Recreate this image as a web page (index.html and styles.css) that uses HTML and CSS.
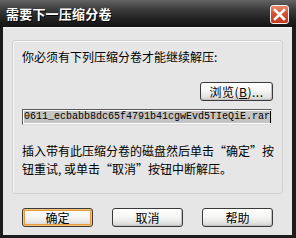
FILE: index.html
```html
<!DOCTYPE html>
<html lang="zh-CN">
<head>
<meta charset="utf-8">
<link rel="stylesheet" href="styles.css">
</head>
<body>
<div class="window">
  <div class="titlebar">
    <span class="title">需要下一压缩分卷</span>
    <button class="close" aria-label="关闭">
      <svg width="13" height="13" viewBox="0 0 13 13"><path d="M2 2 L11 11 M11 2 L2 11" stroke="#fff" stroke-width="2.6" stroke-linecap="square"/></svg>
    </button>
  </div>
  <div class="frame">
    <div class="group">
      <div class="label">你必须有下列压缩分卷才能继续解压:</div>
      <div class="browse-row"><button class="btn browse">浏览(<u>B</u>)...</button></div>
      <div class="input"><span class="sel">0611_ecbabb8dc65f4791b41cgwEvd5TIeQiE.rar</span><span class="caret"></span></div>
      <div class="msg">
        <div class="line">插入带有此压缩分卷的磁盘然后单击<span class="ql">“</span>确定<span class="qr">”</span>按</div>
        <div class="line">钮重试, 或单击<span class="ql">“</span>取消<span class="qr">”</span>按钮中断解压。</div>
      </div>
    </div>
    <div class="buttons">
      <button class="btn default">确定</button>
      <button class="btn">取消</button>
      <button class="btn">帮助</button>
    </div>
  </div>
</div>
</body>
</html>
```

FILE: styles.css
```css
* { box-sizing: border-box; }
html, body { margin: 0; padding: 0; background: #1c1c1c; }
body {
  font-family: "Noto Sans CJK SC", "DejaVu Sans", sans-serif;
  font-size: 12px;
  color: #000;
}
.window {
  width: 296px;
  height: 238px;
  display: flex;
  flex-direction: column;
  background: #1c1c1c;
}
.titlebar {
  height: 27px;
  flex: none;
  display: flex;
  align-items: center;
  justify-content: space-between;
  padding: 0 7px 0 6px;
  background: linear-gradient(#646464 0%, #3c3c3c 35%, #222 70%, #141414 100%);
}
.title {
  color: #fff;
  font-weight: bold;
  font-size: 13px;
  letter-spacing: 0.2px;
  text-shadow: 1px 1px 0 #000;
}
.close {
  width: 19px;
  height: 19px;
  padding: 0;
  margin-top: 1px;
  border: 1px solid #f0f0f0;
  border-radius: 3px;
  background: linear-gradient(#ec8a6a 0%, #d8502e 45%, #c23a1c 100%);
  display: flex;
  align-items: center;
  justify-content: center;
}
.frame {
  flex: 1;
  margin: 0 4px 3px 3px;
  background: #e6e6e6;
  border-top: 1px solid #f4f4f4;
  padding: 12px 9px 0 9px;
}
.group {
  height: 154px;
  border: 1px solid #d0d0d0;
  border-radius: 3px;
  box-shadow: inset 1px 1px 0 #f6f6f6;
  padding: 8px 9px 0 9px;
}
.label {
  line-height: 16px;
  height: 16px;
}
.browse-row {
  display: flex;
  justify-content: flex-end;
  margin-top: 17px;
}
.btn {
  font-family: "Noto Sans CJK SC", "DejaVu Sans", sans-serif;
  font-size: 12px;
  color: #000;
  height: 19px;
  width: 71px;
  padding: 0;
  border: 1px solid #3a3a3a;
  border-radius: 3px;
  background: linear-gradient(#ffffff 0%, #f6f6f4 45%, #e4e4e2 80%, #cfcfcd 100%);
  box-shadow: inset -1px -1px 0 #c2c2c0;
  line-height: 16px;
}
.browse {
  width: 73px;
  letter-spacing: 0.5px;
}
.browse u { text-decoration: underline; }
.input {
  margin-top: 8px;
  height: 16px;
  width: 250px;
  border: 1px solid #5a5a5a;
  border-right-color: #dcdcdc;
  border-bottom-color: #dcdcdc;
  background: #fff;
  display: flex;
  align-items: center;
  padding-left: 1px;
  overflow: hidden;
  white-space: nowrap;
}
.sel {
  font-family: "Liberation Mono", monospace;
  font-size: 10px;
  line-height: 12px;
  background: #c4c4c4;
  color: #000;
}
.caret {
  width: 1px;
  height: 12px;
  background: #000;
  flex: none;
}
.msg {
  margin-top: 17px;
}
.line {
  height: 18px;
  line-height: 18px;
  white-space: nowrap;
}
.ql, .qr {
  display: inline-block;
  width: 12px;
}
.ql { text-align: right; }
.qr { text-align: left; }
.buttons {
  display: flex;
  gap: 19px;
  padding-left: 10px;
  margin-top: 14px;
}
.btn.default {
  border-color: #3a3a3a;
  box-shadow: inset 0 0 0 1px #f3c47c, inset 0 0 0 2px #e69a3c;
}
```
